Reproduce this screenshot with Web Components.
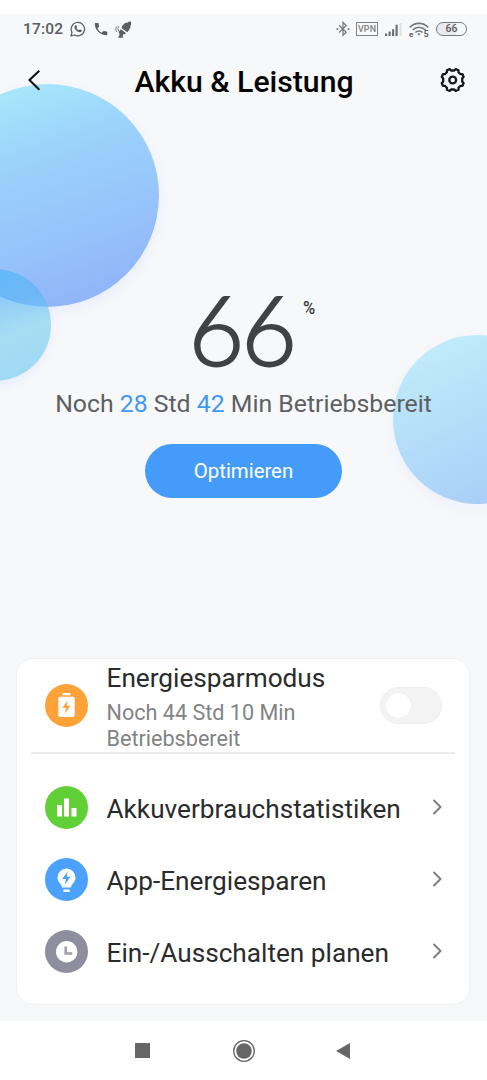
<!DOCTYPE html>
<html lang="de">
<head>
<meta charset="utf-8">
<title>Akku &amp; Leistung</title>
<style>
html,body{margin:0;padding:0;background:#fff}
body{font-family:Roboto,"Liberation Sans",sans-serif;overflow:hidden}
</style>
</head>
<body>
<battery-app></battery-app>
<script>
function define(name, html) {
  const t = document.createElement('template');
  t.innerHTML = html;
  customElements.define(name, class extends HTMLElement {
    constructor() {
      super();
      this.attachShadow({ mode: 'open' }).appendChild(t.content.cloneNode(true));
    }
  });
}

define('status-bar', `
<style>
:host{display:flex;justify-content:space-between;align-items:center;height:30px;padding:0 20px 0 23px;color:#5c5d5f;box-sizing:border-box}
div{display:flex;align-items:center}
svg{display:block;flex:none}
.time{font-size:15.500px;font-weight:500;line-height:20px;letter-spacing:.2px;width:47px;white-space:nowrap}
.vpn{box-sizing:border-box;width:22px;height:14px;border:1px solid #818284;margin:0 6px 0 7px;font-size:9px;line-height:12px;justify-content:center;font-weight:500;color:#818284;letter-spacing:.1px}
.bat{box-sizing:border-box;width:31px;height:14px;border:1.3px solid #77787a;border-radius:7px;justify-content:center;font-size:10.500px;line-height:12px;font-weight:500;margin-left:7px;background:linear-gradient(90deg,#e9eaec 66%,#f7f8fa 66%)}
</style>
<div>
  <span class="time">17:02</span>
  <svg width="16" height="16" viewBox="0 0 16 16"><path d="M1 15l1-3.7A6.7 6.7 0 1 1 4.700 14z" fill="none" stroke="#5c5d5f" stroke-width="1.25" stroke-linejoin="round"/><path d="M5.500 4.300c.4-.3.9-.2 1 .2l.5 1.200c.1.500-.6.800-.5 1.200.5 1.100 1.300 1.900 2.500 2.400.4.100.7-.8 1.200-.7l1.400.7c.4.200.1 1-.3 1.400-2.300 1.800-7.700-2.500-6.700-5.300.1-.4.500-.8.900-1.100z" fill="#5c5d5f"/></svg>
  <svg style="margin-left:8px" width="14" height="14" viewBox="0 0 14 14"><path d="M1.600 1h2.300c.5 0 .8.300.8.800 0 .9.200 1.700.4 2.500.1.300 0 .6-.2.800L3.500 6.500c1 1.900 2.300 3.200 4.200 4.200l1.500-1.500c.2-.2.500-.3.800-.2.800.3 1.700.4 2.500.4.500 0 .8.300.8.800v2.200c0 .5-.3.800-.8.800C6 13.200.8 8 .8 1.800c0-.5.300-.8.800-.8z" fill="#5c5d5f"/></svg>
  <svg style="margin-left:7px" width="17" height="17" viewBox="0 0 17 17"><path d="M15.900.6c.5 1.500.1 3.400-.5 4.600.2 1-.2 2-1 2.700-.3 1.300-1.200 2.600-2.600 3.200L6.700 7.400c-.1-1.900.8-3.300 2.200-4.200.8-1.100 1.900-1.500 3-1.300C13.200.8 14.600.300 15.900.6z" fill="#5c5d5f"/><path d="M5.800 8.300l4.900 3.500-.5 1.400-1.700-.2-1 2.500 1.200 1.200H3l1.700-3.300-1.200-2.300z" fill="#5c5d5f"/><path d="M3.900 5.300C2.700 6.800 2.700 8.500 3.800 10M2.100 5.200C.4 7 .4 9.200 2 11" fill="none" stroke="#6b6c6e" stroke-width=".9"/><path d="M6.500 7.600l5 3.600" stroke="#f7f8fa" stroke-width=".7"/></svg>
</div>
<div>
  <svg width="14" height="16" viewBox="0 0 14 16" style="margin-right:-1px"><path d="M3 4.300l7.300 7L7 14.300V1.500l3.300 3L3 11.600" fill="none" stroke="#77787a" stroke-width="1.250"/><circle cx="1.400" cy="8" r="1.100" fill="#77787a"/><circle cx="12.500" cy="8" r="1.100" fill="#77787a"/></svg>
  <div class="vpn" style="margin-left:7.500px">VPN</div>
  <svg width="19" height="15" viewBox="0 0 19 15"><path d="M1 14v-2.500h2.200V14zM4.500 14V9.600h2.200V14zM8 14V7.200h2.200V14zM11.500 14V2.800h2.200V14z" fill="#6f7072"/><path d="M15.500 14V1h2.200v13z" fill="#e0e1e3"/></svg>
  <svg style="margin-left:6px" width="20" height="17" viewBox="0 0 20 17"><g fill="none" stroke="#77787a" stroke-width="1.700"><path d="M.8 6.300C6 1 14 1 19.200 6.300"/><path d="M3.600 9C7.400 5.300 12.600 5.300 16.400 9"/><path d="M6.400 11.500c2-2 5.200-2 7.200 0"/></g><path d="M8.400 12.700q1.600-1 3.200 0L10 14.700z" fill="#77787a"/><text x="0" y="15.800" font-size="8" font-weight="700" fill="#5c5d5f">e</text><text x="14.800" y="16.200" font-size="8.500" font-weight="700" fill="#5c5d5f">5</text></svg>
  <div class="bat">66</div>
</div>`);

define('title-bar', `
<style>
:host{display:grid;grid-template-columns:28px 1fr 28px;align-items:center;height:74px;padding:0 19px 0 20px;box-sizing:border-box}
h1{margin:0;text-align:center;font-size:30.200px;line-height:36px;font-weight:500;color:#050505;white-space:nowrap;padding-top:1px}
svg{display:block}
</style>
<svg width="28" height="28" viewBox="0 0 28 28"><path d="M19.300 3.700L9.500 13.100l9.800 9.600" fill="none" stroke="#111" stroke-width="2.100"/></svg>
<h1><slot></slot></h1>
<svg width="28" height="28" viewBox="0 0 28 28"><g transform="translate(12.700 13)" fill="none" stroke="#17181a" stroke-width="2.300"><path stroke-linejoin="round" d="M-3-10.900L-1.600-9.500H1.600L3-10.900L5.800-9.800V-7.800L7.800-5.800H9.800L10.900-3L9.500-1.600V1.600L10.900 3L9.800 5.800H7.800L5.800 7.800V9.800L3 10.900L1.600 9.500H-1.600L-3 10.900L-5.800 9.800V7.800L-7.800 5.800H-9.800L-10.900 3L-9.500 1.600V-1.600L-10.900-3L-9.800-5.800H-7.800L-5.800-7.800V-9.800Z"/><circle r="3.400"/></g></svg>`);

define('battery-hero', `
<style>
:host{display:flex;flex-direction:column;align-items:center;height:540px;box-sizing:border-box;padding-top:161px}
.level{display:flex;align-items:flex-start;height:100px;padding-left:18px}
.num{font:300 96px/100px Lato,sans-serif;color:#414244;letter-spacing:-2.800px;-webkit-text-stroke:1.900px #414244}
.pct{font-size:18px;line-height:22px;font-weight:500;color:#38393b;margin:18px 0 0 9px;transform:scaleX(.92);transform-origin:0 0}
p{margin:10px 0 0;font-size:24.800px;line-height:30px;color:#5d5f62;white-space:nowrap}
b{font-weight:400;color:#4098ef}
button{margin:25px 0 0;width:197px;height:54px;border:0;border-radius:27px;background:#459bf9;color:#fff;font:400 20.400px/24px Roboto,sans-serif;letter-spacing:-.03px;padding:0}
</style>
<div class="level"><span class="num">66</span><span class="pct">%</span></div>
<p>Noch <b>28</b> Std <b>42</b> Min Betriebsbereit</p>
<button>Optimieren</button>`);

define('bubble-field', `
<style>
:host{position:absolute;inset:0;overflow:hidden;z-index:-1}
i{position:absolute;border-radius:50%}
.a{left:-64px;top:70px;width:223px;height:223px;background:linear-gradient(160deg,#a9e9fa 8%,#9ad3fb 35%,#97c4fa 63%,#8fb2f9 95%);box-shadow:0 5px 14px #a9c2ff30}
.b{left:-61.500px;top:255px;width:112px;height:112px;background:linear-gradient(160deg,#3fb4f799 10%,#55b4f499 38%,#6ecdee99 60%,#62c1f099);box-shadow:0 4px 10px #a9c2ff2e}
.c{left:392.500px;top:320.500px;width:169px;height:169px;background:linear-gradient(155deg,#c1edfa 8%,#b3dcf9 50%,#a8cbf7 95%);box-shadow:0 5px 14px #a9c2ff20}
</style><i class="a"></i><i class="b"></i><i class="c"></i>`);

define('round-icon', `
<style>
:host{display:block;width:43px;height:43px;border-radius:50%;background:var(--tint);flex:none}
::slotted(svg){display:block;width:43px;height:43px}
</style><slot></slot>`);

define('toggle-switch', `
<style>
:host{display:flex;align-items:center;box-sizing:border-box;width:62px;height:37px;border-radius:19px;background:#f3f3f3;border:1px solid #efefef;padding-left:5px;flex:none}
i{width:25px;height:25px;border-radius:50%;background:#fff;box-shadow:0 0 2px #0000000d}
</style><i></i>`);

define('setting-row', `
<style>
:host{display:flex;align-items:center;height:72px;padding:0 26px 0 28px;box-sizing:border-box}
.text{flex:1;margin-left:18.500px;min-width:0;white-space:nowrap;padding-top:3px}
.title{font-size:26.200px;line-height:30px;color:#2b2b2c}
::slotted([slot=note]){display:block;font-size:21.600px;line-height:25.500px;color:#828385;margin-top:7px}
.chev{display:block}
</style>
<slot name="icon"></slot>
<div class="text"><div class="title"><slot></slot></div><slot name="note"></slot></div>
<slot name="end"><svg class="chev" width="12" height="18" viewBox="0 0 12 18"><path d="M2.500 2l7 7-7 7" fill="none" stroke="#7b7b7c" stroke-width="1.900"/></svg></slot>`);

define('settings-card', `
<style>
:host{display:block;box-sizing:border-box;margin:0 17px 0 16px;height:347px;border:1px solid #eef0f3;border-radius:17px;background:#fff}
.lead{height:93px;display:flex;flex-direction:column;justify-content:center;box-sizing:border-box}
hr{margin:0 14px 0 14px;border:0;height:2px;background:#ebebec}
.list{padding-top:17px}
.lead setting-row{height:93px}
.lead toggle-switch{margin-right:1px}
</style>
<div class="lead"><setting-row>
  <round-icon slot="icon" style="--tint:#fca239"><svg viewBox="0 0 43 43"><rect x="17.500" y="9" width="8" height="2.200" rx=".6" fill="#fff"/><rect x="13.300" y="12.800" width="16.400" height="20.200" rx="1.800" fill="#fff"/><path d="M22.600 16.500l-5.200 7.300h3.500l-1 5.700 5.500-7.700h-3.500z" fill="#fca239"/></svg></round-icon>
  Energiesparmodus<span slot="note">Noch 44 Std 10 Min<br>Betriebsbereit</span>
  <toggle-switch slot="end"></toggle-switch>
</setting-row></div>
<hr>
<div class="list">
<setting-row><round-icon slot="icon" style="--tint:#61cf38"><svg viewBox="0 0 43 43"><path d="M12 19h5v11.500h-5zM19 12.500h5v18h-5zM26.500 22h5v8.500h-5z" fill="#fff"/></svg></round-icon>Akkuverbrauchstatistiken</setting-row>
<setting-row><round-icon slot="icon" style="--tint:#4ba1fc"><svg viewBox="0 0 43 43"><path d="M21.500 10.500a9 9 0 0 1 9 9c0 3.300-1.700 5.200-3.300 6.900-.7.800-1 1.500-1.200 3.100h-9c-.2-1.600-.5-2.300-1.200-3.100-1.600-1.700-3.300-3.600-3.300-6.900a9 9 0 0 1 9-9zM18.400 31.500h6.200v2.500h-6.200z" fill="#fff"/><path d="M22.600 13.500l-5.400 7.400h3.600l-1 5.800 5.600-7.900h-3.500z" fill="#4ba1fc"/></svg></round-icon>App-Energiesparen</setting-row>
<setting-row><round-icon slot="icon" style="--tint:#8f8e9e"><svg viewBox="0 0 43 43"><circle cx="21.700" cy="21.700" r="10.700" fill="#fff"/><path d="M20.700 16.500v7h6.500" fill="none" stroke="#a09fab" stroke-width="2.600"/></svg></round-icon>Ein-/Ausschalten planen</setting-row>
</div>`);

define('nav-bar', `
<style>
:host{display:flex;justify-content:space-between;align-items:center;height:59px;padding:0 137px 0 135px;background:#fff}
svg{display:block}
</style>
<svg width="15" height="15"><path d="M0 0h15v15H0z" fill="#666"/></svg>
<svg style="margin-left:1px" width="22" height="22" viewBox="0 0 22 22"><circle cx="11" cy="11" r="10.300" fill="none" stroke="#666" stroke-width="1.300"/><circle cx="11" cy="11" r="7.800" fill="#666"/></svg>
<svg width="14" height="16" viewBox="0 0 14 16"><path d="M14 0v16L0 8z" fill="#666"/></svg>`);

define('battery-app', `
<style>
:host{display:block;width:487px;height:1080px;padding-top:14px;box-sizing:border-box;background:#fff}
main{position:relative;z-index:0;height:1007px;background:#f7f8fa}
</style>
<main>
<bubble-field></bubble-field>
<status-bar></status-bar>
<title-bar>Akku &amp; Leistung</title-bar>
<battery-hero></battery-hero>
<settings-card></settings-card>
</main>
<nav-bar></nav-bar>`);
</script>
</body>
</html>
